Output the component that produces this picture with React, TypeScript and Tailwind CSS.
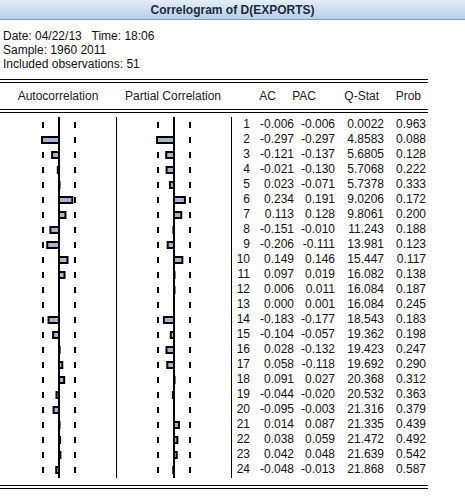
const rows: [number, number, number, string, string][] = [
  [1, -0.006, -0.006, '0.0022', '0.963'],
  [2, -0.297, -0.297, '4.8583', '0.088'],
  [3, -0.121, -0.137, '5.6805', '0.128'],
  [4, -0.021, -0.13, '5.7068', '0.222'],
  [5, 0.023, -0.071, '5.7378', '0.333'],
  [6, 0.234, 0.191, '9.0206', '0.172'],
  [7, 0.113, 0.128, '9.8061', '0.200'],
  [8, -0.151, -0.01, '11.243', '0.188'],
  [9, -0.206, -0.111, '13.981', '0.123'],
  [10, 0.149, 0.146, '15.447', '0.117'],
  [11, 0.097, 0.019, '16.082', '0.138'],
  [12, 0.006, 0.011, '16.084', '0.187'],
  [13, 0.0, 0.001, '16.084', '0.245'],
  [14, -0.183, -0.177, '18.543', '0.183'],
  [15, -0.104, -0.057, '19.362', '0.198'],
  [16, 0.028, -0.132, '19.423', '0.247'],
  [17, 0.058, -0.118, '19.692', '0.290'],
  [18, 0.091, 0.027, '20.368', '0.312'],
  [19, -0.044, -0.02, '20.532', '0.363'],
  [20, -0.095, -0.003, '21.316', '0.379'],
  [21, 0.014, 0.087, '21.335', '0.439'],
  [22, 0.038, 0.059, '21.472', '0.492'],
  [23, 0.042, 0.048, '21.639', '0.542'],
  [24, -0.048, -0.013, '21.868', '0.587'],
];

const ROW = 15;
const SCALE = 57;

const fmt = (v: number) => v.toFixed(3);

// one bar column of the correlogram
const BarChart = ({ width, zero, values }: { width: number; zero: number; values: number[] }) => {
  const h = values.length * ROW + 1;
  return (
    <svg width={width} height={h} className="block">
      <rect x={zero - 1} y={0} width={2} height={h} fill="#000" />
      {values.map((v, i) => {
        const top = i * ROW;
        const w = v * SCALE;
        const aw = Math.abs(w);
        const x = w < 0 ? zero + w : zero;
        return (
          <g key={i}>
            <rect x={zero - 17} y={top + 5} width={2} height={6} fill="#000" />
            <rect x={zero + 15} y={top + 5} width={2} height={6} fill="#000" />
            {aw >= 0.5 &&
              (aw < 2.5 ? (
                <rect x={w < 0 ? zero - 1 - aw : zero} y={top + 4} width={Math.max(aw, 1.5)} height={8} fill="#000" />
              ) : (
                <rect x={x} y={top + 5} width={aw} height={6} fill="#a9b3cd" stroke="#000" strokeWidth={2} />
              ))}
          </g>
        );
      })}
    </svg>
  );
};

const DoubleLine = () => <div className="w-[428px] h-[4px] border-t border-b border-black" />;

export default function App() {
  return (
    <div className="w-[465px] h-[499px] bg-white text-[12px] text-[#111] overflow-hidden" style={{ fontFamily: '"Liberation Sans", Arial, sans-serif' }}>
      {/* Title bar */}
      <div className="h-[20px] bg-gradient-to-b from-[#e4edf7] to-[#b8cfeb] border-b border-[#8a9bb4] flex items-center justify-center">
        <span className="font-bold text-[12px] text-[#1c2a3b] leading-none">Correlogram of D(EXPORTS)</span>
      </div>

      {/* Info */}
      <div className="pt-[9px] pl-[3px] leading-[14px]">
        <div className="whitespace-pre">Date: 04/22/13   Time: 18:06</div>
        <div>Sample: 1960 2011</div>
        <div>Included observations: 51</div>
      </div>

      <div className="mt-[8px]">
        <DoubleLine />
        <div className="h-[26px] flex items-center text-[#222]">
          <div className="w-[116px] text-center">Autocorrelation</div>
          <div className="w-[114px] text-center">Partial Correlation</div>
          <div className="w-[46px] text-right">AC</div>
          <div className="w-[40px] text-right">PAC</div>
          <div className="w-[63px] text-right">Q-Stat</div>
          <div className="w-[42px] text-right">Prob</div>
        </div>
        <DoubleLine />

        {/* Body */}
        <div className="mt-[4px] flex">
          <div className="w-[117px] border-r border-black">
            <BarChart width={116} zero={59} values={rows.map((r) => r[1])} />
          </div>
          <div className="w-[115px] border-r border-black">
            <BarChart width={114} zero={57} values={rows.map((r) => r[2])} />
          </div>
          <div className="flex flex-col">
            {rows.map(([lag, ac, pac, q, p]) => (
              <div key={lag} className="h-[15px] leading-[15px] flex">
                <div className="w-[18px] text-right">{lag}</div>
                <div className="w-[44px] text-right">{fmt(ac)}</div>
                <div className="w-[41px] text-right">{fmt(pac)}</div>
                <div className="w-[49px] text-right">{q}</div>
                <div className="w-[42px] text-right">{p}</div>
              </div>
            ))}
          </div>
        </div>

        <div className="mt-[7px]">
          <DoubleLine />
        </div>
      </div>
    </div>
  );
}
